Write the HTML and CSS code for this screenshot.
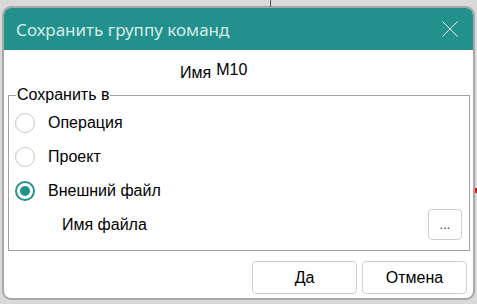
FILE: index.html
```html
<!DOCTYPE html>
<html lang="ru">
<head>
    <meta charset="utf-8"/>
    <title>Сохранить группу команд</title>
    <link rel="stylesheet" href="styles.css">
</head>
<body>
<div class="desk">
    <div class="desk-line"></div>
    <div class="desk-mark"></div>

    <div class="dialog">
        <div class="titlebar">
            <span class="title">Сохранить группу команд</span>
            <svg class="close" width="16" height="16" viewBox="0 0 16 16">
                <path d="M0.5 0.5 L15.5 15.5 M15.5 0.5 L0.5 15.5" stroke="#e6f2f1" stroke-width="1" fill="none"/>
            </svg>
        </div>

        <div class="content">
            <div class="name-row">
                <span class="name-label">Имя</span>
                <span class="name-value">M10</span>
            </div>

            <fieldset class="group">
                <legend>Сохранить в</legend>
                <label class="radio"><span class="dot"></span>Операция</label>
                <label class="radio"><span class="dot"></span>Проект</label>
                <label class="radio"><span class="dot checked"></span>Внешний файл</label>
                <div class="file-row">
                    <span class="file-label">Имя файла</span>
                    <span class="browse">...</span>
                </div>
            </fieldset>

            <div class="buttons">
                <span class="btn">Да</span>
                <span class="btn">Отмена</span>
            </div>
        </div>
    </div>
</div>
</body>
</html>
```

FILE: styles.css
```css
body{
    margin: 0;
    padding: 0;
    background: #d9d9d9;
    font-family: "Liberation Sans", Arial, sans-serif;
    color: #000;
}

.desk{
    position: relative;
    width: 477px;
    height: 304px;
    padding: 6px 2px 4px 2px;
    box-sizing: border-box;
}

/* bits of the window behind the dialog */
.desk-line{
    position: absolute;
    left: 270px;
    top: 0;
    width: 1px;
    height: 7px;
    background: #555;
}
.desk-mark{
    position: absolute;
    left: 475px;
    top: 188px;
    width: 2px;
    height: 5px;
    background: #e01010;
}

.dialog{
    height: 294px;
    border: 2px solid #a8a8a8;
    border-radius: 9px;
    overflow: hidden;
    background: #fff;
    display: flex;
    flex-direction: column;
    box-sizing: border-box;
}

.titlebar{
    height: 42px;
    background: #23918b;
    display: flex;
    align-items: center;
    justify-content: space-between;
    padding: 0 15px 0 12px;
    flex-shrink: 0;
}

.title{
    color: #d6ebe9;
    font-family: "Noto Sans", "Open Sans", sans-serif;
    font-size: 17px;
}

.content{
    flex: 1;
    display: flex;
    flex-direction: column;
    padding: 0 3px 0 4px;
}

.name-row{
    display: flex;
    align-items: flex-start;
    gap: 5px;
    padding-left: 172px;
    margin-top: 11px;
    height: 25px;
}
.name-label{
    font-size: 16px;
    margin-top: 3px;
}
.name-value{
    font-size: 16px;
}

.group{
    margin: 0;
    padding: 2px 0 8px 0;
    border: 1px solid #a0a0a0;
    height: 165px;
    box-sizing: border-box;
}
.group legend{
    font-size: 16px;
    padding: 0 1px;
    margin-left: 7px;
}

.radio{
    display: flex;
    align-items: center;
    gap: 13px;
    font-size: 16px;
    height: 34px;
    padding-left: 6px;
}

.dot{
    width: 20px;
    height: 20px;
    border: 1.5px solid #c6c6c6;
    border-radius: 50%;
    box-sizing: border-box;
    position: relative;
}
.dot.checked{
    border: 2px solid #23918b;
}
.dot.checked::after{
    content: "";
    position: absolute;
    left: 3px;
    top: 3px;
    width: 10px;
    height: 10px;
    border-radius: 50%;
    background: #23918b;
}

.file-row{
    display: flex;
    align-items: center;
    justify-content: space-between;
    padding: 0 7px 0 53px;
    margin-top: 1px;
    font-size: 16px;
}

.browse{
    width: 34px;
    height: 31px;
    border: 1px solid #cfcfcf;
    border-radius: 4px;
    box-sizing: border-box;
    display: flex;
    align-items: center;
    justify-content: center;
    font-size: 13px;
    color: #333;
}

.buttons{
    display: flex;
    justify-content: flex-end;
    gap: 5px;
    padding: 10px 3px 0 0;
}

.btn{
    width: 105px;
    height: 33px;
    border: 1px solid #cfcfcf;
    border-radius: 4px;
    box-sizing: border-box;
    display: flex;
    align-items: center;
    justify-content: center;
    font-size: 16px;
}
```
